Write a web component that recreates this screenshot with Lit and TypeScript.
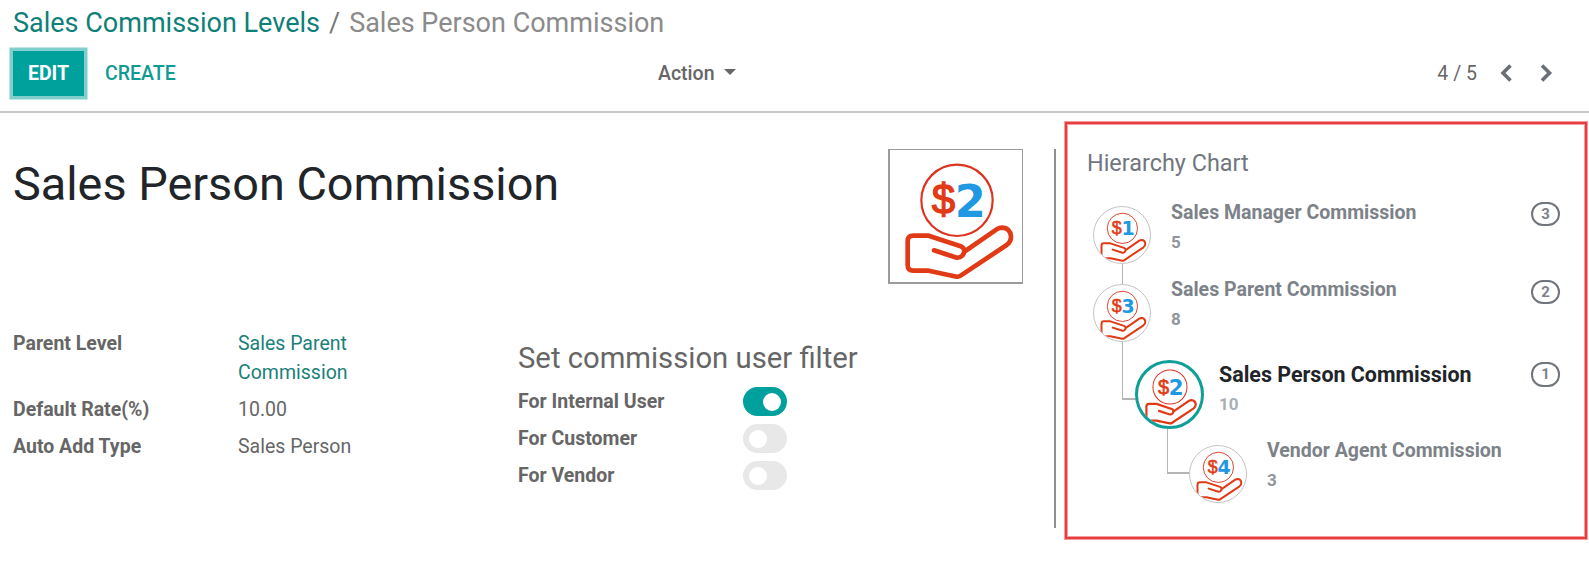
import { LitElement, html, css, svg } from "lit";
import { customElement, property } from "lit/decorators.js";
import { classMap } from "lit/directives/class-map.js";

@customElement("commission-icon")
class CommissionIcon extends LitElement {
  @property() digit = "1";
  static styles = css`
    :host { display: block; }
    .art { display: block; width: 100%; height: 100%; }
    .hand { fill: none; stroke: #e03a16; stroke-width: 14; stroke-linejoin: round; stroke-linecap: round; }
    .coin { fill: none; stroke: #dc3420; stroke-width: 6.5; }
    .dollar { font: 400 126px "Liberation Sans", sans-serif; fill: #e03a16; stroke: #e03a16; stroke-width: 4; }
    .digit { font: 700 134px "DejaVu Sans", sans-serif; fill: #2198e2; }
  `;
  render() {
    return html`<svg class="art" viewBox="60 60 396 396">
      <circle class="coin" cx="261" cy="211" r="107"></circle>
      ${svg`<text class="dollar" x="185" y="252">$</text><text class="digit" x="254" y="261">${this.digit}</text>`}
      <path class="hand" d="M192 361 L256 382 Q268 386 277 377 Q286 366 281 356 Q278 351 272 349 L176 317 H130 Q113 317 113 334 V405 Q113 422 130 422 H176 L260 440 Q266 441 272 437 L410 345 Q423 335 423 320 Q421 294 396 293 Q388 293 380 298 L286 363"></path>
    </svg>`;
  }
}

@customElement("app-root")
class AppRoot extends LitElement {
  static styles = css`
    :host { display: block; width: 1589px; height: 582px; overflow: hidden; background: #fff; color: #666; font: 19.5px/29px Roboto, sans-serif; }
    * { box-sizing: border-box; }
    .header { height: 113px; border-bottom: 2px solid #c9c9c9; padding: 0 30px 0 13px; }
    .crumbs { display: flex; height: 51px; line-height: 46px; font-size: 27px; color: #8b8b8b; }
    .crumb-link { color: #0d8079; }
    .slash { padding: 0 9px 0 9px; color: #777; }
    .toolbar { display: grid; grid-template-columns: 645px 1fr auto; align-items: center; height: 45px; }
    .buttons { display: flex; align-items: center; gap: 21px; font-weight: 500; }
    .edit { width: 71px; height: 45px; line-height: 45px; text-align: center; background: #00a09d; color: #fff; font-weight: 700; box-shadow: 0 0 0 3.5px #80cfcc; }
    .create { color: #109a95; }
    .action { display: flex; align-items: center; gap: 9px; font-weight: 500; }
    .caret { border: 6px solid transparent; border-top-color: #666; border-bottom: 0; margin-top: -3px; }
    .pager { display: flex; align-items: center; }
    .chev { display: block; width: 14px; height: 20px; fill: none; stroke: #6a6f76; stroke-width: 3.6; margin-left: 22px; margin-top: -1px; }
    .chev.next { margin-left: 27px; margin-right: 5px; }
    .body { display: flex; height: 469px; }
    .sheet { width: 1056px; height: 379px; margin-top: 36px; border-right: 2px solid #8f8f8f; padding-left: 13px; }
    .top { display: flex; justify-content: space-between; padding-right: 31px; height: 180px; }
    .title { margin: 0; font-size: 46.8px; font-weight: 400; line-height: 70px; color: #212529; white-space: nowrap; }
    .picture { width: 135px; height: 135px; border: 1px solid #9b9b9b; border-left-width: 2px; border-bottom-width: 2px; }
    .groups { display: grid; grid-template-columns: 505px 1fr; }
    .fields { display: grid; grid-template-columns: 225px 170px; row-gap: 8px; align-content: start; }
    .label { font-weight: 700; }
    .link { color: #1a8079; }
    .filter { padding-top: 11px; }
    .filter-title { margin: 0 0 11px; font-size: 29.25px; font-weight: 400; line-height: 36px; white-space: nowrap; }
    .options { display: grid; grid-template-columns: 225px 44px; row-gap: 8px; }
    .toggle { display: flex; align-items: center; height: 29px; padding: 0 6px; border-radius: 15px; background: #e8e8e8; }
    .toggle.on { justify-content: flex-end; background: #00a09d; }
    .knob { width: 18px; height: 18px; border-radius: 50%; background: #fff; }
    .panel { width: 522px; height: 417px; margin: 9px 0 0 9px; border: 2px solid #e24040; box-shadow: 0 0 0 1px #fb9a9a, inset 0 0 0 1px #fb9a9a; padding: 24px 25px 0 20px; }
    .panel-title { margin: 0; font-size: 23.4px; font-weight: 400; line-height: 30px; color: #70767d; }
    .tree { padding: 28px 0 0 6px; }
    .node { display: flex; height: 77.6px; color: #7c8288; }
    .node.active { height: 83.5px; margin-left: 42px; }
    .node.leaf { margin-left: 96px; }
    .rail { display: flex; flex-direction: column; align-items: flex-start; width: 78px; }
    .active .rail { width: 84px; }
    .avatar { flex: none; width: 58px; height: 58px; border: 1px solid #c4c4c4; border-radius: 50%; overflow: hidden; }
    .active .avatar { width: 69px; height: 69px; margin-top: -1px; border: 3px solid #109e98; }
    .pic { width: 100%; height: 100%; }
    .wire { flex: none; margin-left: 28.5px; width: 1px; height: 20px; background: #b5b5b5; }
    .wire.elbow { width: 14px; height: 58px; border: solid #b5b5b5; border-width: 0 0 2px 1.5px; background: none; }
    .active .wire.elbow { margin-left: 32px; width: 22px; height: 45px; border-left-width: 1px; }
    .info { flex: 1; margin-top: -8.5px; white-space: nowrap; }
    .name { font-weight: 700; height: 30px; }
    .active .info { margin-top: -1px; }
    .active .name { color: #212529; font-size: 21.45px; }
    .rate { font-size: 17px; font-weight: 700; color: #8f959b; line-height: 28px; }
    .active .rate { color: #a9afb5; }
    .badge { width: 29px; height: 24px; margin-top: -4px; border: 2px solid #70757b; border-radius: 12px; text-align: center; font-size: 15px; font-weight: 700; line-height: 20px; }
    .active .badge { margin-top: 1px; height: 25px; line-height: 21px; }
  `;

  fields = [
    { label: "Parent Level", value: "Sales Parent Commission", link: true },
    { label: "Default Rate(%)", value: "10.00", link: false },
    { label: "Auto Add Type", value: "Sales Person", link: false },
  ];
  options = [
    { label: "For Internal User", on: true },
    { label: "For Customer", on: false },
    { label: "For Vendor", on: false },
  ];
  nodes = [
    { name: "Sales Manager Commission", rate: 5, digit: "1", badge: "3", wire: "straight" },
    { name: "Sales Parent Commission", rate: 8, digit: "3", badge: "2", wire: "elbow" },
    { name: "Sales Person Commission", rate: 10, digit: "2", badge: "1", wire: "elbow", active: true },
    { name: "Vendor Agent Commission", rate: 3, digit: "4", badge: "", wire: "", leaf: true },
  ];

  render() {
    return html`
      <header class="header">
        <nav class="crumbs">
          <span class="crumb-link">Sales Commission Levels</span><span class="slash">/</span><span class="crumb-here">Sales Person Commission</span>
        </nav>
        <div class="toolbar">
          <div class="buttons"><span class="edit">EDIT</span><span class="create">CREATE</span></div>
          <div class="action"><span class="action-text">Action</span><i class="caret"></i></div>
          <div class="pager"><span class="count">4 / 5</span>
            <svg class="chev" viewBox="0 0 14 20"><path d="M11.5 2.5 L4 10 L11.5 17.5"></path></svg>
            <svg class="chev next" viewBox="0 0 14 20"><path d="M2 2.5 L9.5 10 L2 17.5"></path></svg>
          </div>
        </div>
      </header>
      <main class="body">
        <section class="sheet">
          <div class="top">
            <h1 class="title">Sales Person Commission</h1>
            <div class="picture"><commission-icon class="pic" digit="2"></commission-icon></div>
          </div>
          <div class="groups">
            <div class="fields">
              ${this.fields.map((f) => html`<span class="label">${f.label}</span><span class=${classMap({ value: true, link: f.link })}>${f.value}</span>`)}
            </div>
            <div class="filter">
              <h2 class="filter-title">Set commission user filter</h2>
              <div class="options">
                ${this.options.map((o) => html`<span class="label">${o.label}</span><span class=${classMap({ toggle: true, on: o.on })}><i class="knob"></i></span>`)}
              </div>
            </div>
          </div>
        </section>
        <aside class="panel">
          <h3 class="panel-title">Hierarchy Chart</h3>
          <div class="tree">
            ${this.nodes.map((n) => html`
              <div class=${classMap({ node: true, active: !!n.active, leaf: !!n.leaf })}>
                <div class="rail">
                  <div class="avatar"><commission-icon class="pic" digit=${n.digit}></commission-icon></div>
                  ${n.wire ? html`<i class=${classMap({ wire: true, elbow: n.wire === "elbow" })}></i>` : ""}
                </div>
                <div class="info"><div class="name">${n.name}</div><div class="rate">${n.rate}</div></div>
                ${n.badge ? html`<span class="badge">${n.badge}</span>` : ""}
              </div>`)}
          </div>
        </aside>
      </main>`;
  }
}
